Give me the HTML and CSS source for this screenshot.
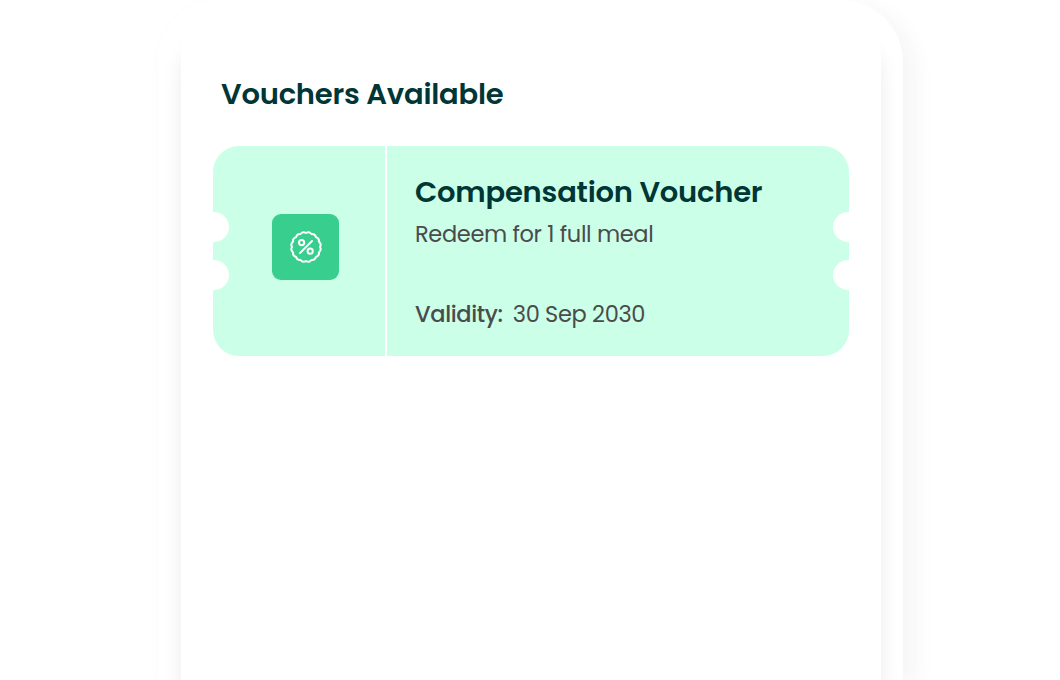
FILE: index.html
```html
<!DOCTYPE html>
<html lang="en">
<head>
  <meta charset="UTF-8">
  <meta name="viewport" content="width=device-width, initial-scale=1.0">
  <title>Vouchers</title>
  <link rel="stylesheet" href="styles.css">
</head>
<body>
  <div class="shell">
    <main class="panel">
      <h1 class="panel-title">Vouchers Available</h1>
      <div class="voucher">
        <div class="voucher-side">
          <div class="voucher-icon">
            <svg width="34" height="34" viewBox="0 0 34 34" fill="none" stroke="#fff" stroke-width="2" stroke-linecap="round" stroke-linejoin="round">
              <path d="M17 3Q20.2 1 22.4 4Q26.1 3.6 26.9 7.1Q30.5 8.3 29.9 11.6Q32.8 14 31 17Q32.8 20 29.9 22.4Q30.5 25.7 26.9 26.9Q26.1 30.4 22.4 30Q20.2 33 17 31Q13.8 33 11.6 30Q7.9 30.4 7.1 26.9Q3.5 25.7 4.1 22.4Q1.2 20 3 17Q1.2 14 4.1 11.6Q3.5 8.3 7.1 7.1Q7.9 3.6 11.6 4Q13.8 1 17 3Z"/>
              <path d="M11 23L23 11"/>
              <circle cx="12.6" cy="12.6" r="2.6"/>
              <circle cx="21.2" cy="21.2" r="2.6"/>
            </svg>
          </div>
        </div>
        <div class="voucher-body">
          <h2 class="voucher-name">Compensation Voucher</h2>
          <p class="voucher-text">Redeem for 1 full meal</p>
          <p class="voucher-validity"><span class="label">Validity:</span><span class="date">30 Sep 2030</span></p>
        </div>
        <span class="notch left upper"></span>
        <span class="notch left lower"></span>
        <span class="notch right upper"></span>
        <span class="notch right lower"></span>
      </div>
    </main>
  </div>
</body>
</html>
```

FILE: styles.css
```css
* {
  box-sizing: border-box;
}
body {
  margin: 0;
  height: 680px;
  background: #fff;
  font-family: Poppins, Inter, sans-serif;
}
.shell {
  width: 745px;
  height: 680px;
  margin-left: 158px;
  padding: 20px 22px 0 23px;
  border-radius: 62px 62px 0 0;
  background: #fff;
  box-shadow: 10px 8px 24px rgba(30, 30, 70, 0.05);
}
.panel {
  height: 660px;
  padding: 50px 32px 0;
  border-radius: 34px 34px 0 0;
  background: #fff;
  box-shadow: 0 22px 20px rgba(30, 30, 60, 0.08);
}
.panel-title {
  margin: 0 0 28px 8px;
  font-size: 29px;
  line-height: 48px;
  font-weight: 600;
  letter-spacing: -0.22px;
  white-space: nowrap;
  color: #003635;
}
.voucher {
  position: relative;
  display: flex;
  height: 210px;
  border-radius: 26px;
  overflow: hidden;
  background: #cbffe8;
}
.voucher-side {
  display: flex;
  align-items: center;
  justify-content: center;
  width: 174px;
  padding: 0 0 9px 13px;
  border-right: 2px solid #fff;
}
.voucher-icon {
  display: flex;
  align-items: center;
  justify-content: center;
  width: 67px;
  height: 66px;
  border-radius: 9px;
  background: #38ce8e;
}
.voucher-body {
  padding: 24px 0 0 28px;
  white-space: nowrap;
  color: #4b4b4b;
}
.voucher-name {
  margin: 0;
  font-size: 29px;
  line-height: 44px;
  font-weight: 600;
  letter-spacing: -0.22px;
  color: #003635;
}
.voucher-text {
  margin: 2px 0 0;
  font-size: 22.5px;
  line-height: 36px;
  letter-spacing: -0.35px;
}
.voucher-validity {
  display: flex;
  gap: 10px;
  margin: 44px 0 0;
  font-size: 22.5px;
  line-height: 36px;
  letter-spacing: -0.35px;
}
.label {
  font-weight: 500;
}

/* Cut-outs on the ticket edges */
.notch {
  position: absolute;
  width: 30px;
  height: 30px;
  border-radius: 50%;
  background: #fff;
}
.left {
  left: -14px;
}
.right {
  right: -14px;
}
.upper {
  top: 66px;
}
.lower {
  top: 114px;
}
```
